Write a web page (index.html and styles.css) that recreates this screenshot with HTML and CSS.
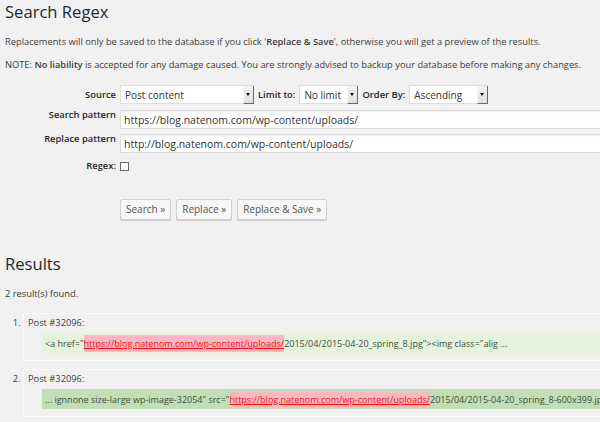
FILE: index.html
```html
<!DOCTYPE html>
<html lang="en">
<head>
<meta charset="utf-8">
<title>Search Regex</title>
<link rel="stylesheet" href="styles.css">
</head>
<body>
<div class="wrap">
  <h2 class="title">Search Regex</h2>
  <p class="note">Replacements will only be saved to the database if you click '<strong>Replace &amp; Save</strong>', otherwise you will get a preview of the results.</p>
  <p class="note">NOTE: <strong>No liability</strong> is accepted for any damage caused. You are strongly advised to backup your database before making any changes.</p>

  <form class="form">
    <div class="row row-source">
      <label class="lbl lbl-source">Source</label>
      <div class="controls">
        <span class="sel sel-source"><select><option>Post content</option></select><span class="arrow"></span></span>
        <label class="inline-lbl">Limit to:</label>
        <span class="sel sel-limit"><select><option>No limit</option></select><span class="arrow"></span></span>
        <label class="inline-lbl">Order By:</label>
        <span class="sel sel-order"><select><option>Ascending</option></select><span class="arrow"></span></span>
      </div>
    </div>
    <div class="row row-search">
      <label class="lbl lbl-search">Search pattern</label>
      <input class="txt" type="text" value="https://blog.natenom.com/wp-content/uploads/">
    </div>
    <div class="row row-replace">
      <label class="lbl lbl-replace">Replace pattern</label>
      <input class="txt" type="text" value="http://blog.natenom.com/wp-content/uploads/">
    </div>
    <div class="row row-regex">
      <label class="lbl lbl-regex">Regex:</label>
      <input class="chk" type="checkbox">
    </div>
    <div class="buttons">
      <button type="button" class="btn">Search »</button>
      <button type="button" class="btn">Replace »</button>
      <button type="button" class="btn">Replace &amp; Save »</button>
    </div>
  </form>

  <h2 class="title results-title">Results</h2>
  <p class="found">2 result(s) found.</p>

  <ol class="results">
    <li class="result">
      <div class="post">Post #32096:</div>
      <div class="match match-light">&lt;a href="<span class="hit">https://blog.natenom.com/wp-content/uploads/</span>2015/04/2015-04-20_spring_8.jpg"&gt;&lt;img class="alig ...</div>
    </li>
    <li class="result">
      <div class="post">Post #32096:</div>
      <div class="match match-dark">... ignnone size-large wp-image-32054" src="<span class="hit">https://blog.natenom.com/wp-content/uploads/</span>2015/04/2015-04-20_spring_8-600x399.jpg" alt="" /&gt;</div>
    </li>
  </ol>
</div>
</body>
</html>
```

FILE: styles.css
```css
html, body {
  margin: 0;
  padding: 0;
  background: #f1f1f1;
  overflow: hidden;
}
body {
  font-family: "Open Sans", "DejaVu Sans", sans-serif;
  font-size: 9.3px;
  color: #3c3c3c;
}
.wrap {
  padding-left: 5px;
}
.title {
  margin: 0;
  font-size: 16.6px;
  font-weight: 400;
  line-height: 24px;
  color: #23282d;
}
.note {
  margin: 10px 0 0;
  line-height: 15px;
  white-space: nowrap;
}
.note + .note {
  margin-top: 8px;
}
.note strong {
  font-weight: 600;
}
.form {
  margin-top: 13px;
}
.row {
  display: flex;
  align-items: flex-start;
}
.lbl {
  width: 111px;
  margin-right: 4px;
  text-align: right;
  font-size: 9.4px;
  font-weight: 600;
  color: #23282d;
  line-height: 12px;
  flex: none;
}
.lbl-source { padding-top: 4px; }
.lbl-search { margin-top: -1.5px; }
.lbl-replace { margin-top: -1px; }
.lbl-regex { margin-top: -2.5px; }
.row-source { margin-bottom: 6px; }
.row-search { margin-bottom: 5px; }
.row-replace { margin-bottom: 9px; }
.controls {
  display: flex;
  align-items: flex-start;
}
.inline-lbl {
  font-size: 9.4px;
  font-weight: 600;
  color: #23282d;
  line-height: 12px;
  padding-top: 4px;
  margin: 0 4px;
}
.sel {
  position: relative;
  display: block;
  height: 19px;
}
.sel select {
  appearance: none;
  -webkit-appearance: none;
  display: block;
  height: 19px;
  width: 100%;
  margin: 0;
  padding: 0 12px 0 4px;
  border: 1px solid #dcdcdc;
  border-radius: 0;
  background: #fff;
  font-family: "Open Sans", "DejaVu Sans", sans-serif;
  font-size: 10px;
  color: #333;
  box-sizing: border-box;
}
.sel-source { width: 134px; }
.sel-limit { width: 59px; }
.sel-order { width: 79px; }
.arrow {
  position: absolute;
  top: 1px;
  right: 0;
  width: 11px;
  height: 18px;
  box-sizing: border-box;
  background: linear-gradient(#f4f4f4, #e0e0e0);
  border-left: 1px solid #f8f8f8;
  border-right: 1px solid #6b6b6b;
  border-bottom: 1px solid #6b6b6b;
}
.arrow::after {
  content: "";
  position: absolute;
  left: 2px;
  top: 7px;
  border-left: 2.5px solid transparent;
  border-right: 2.5px solid transparent;
  border-top: 3px solid #111;
}
.txt {
  display: block;
  width: 500px;
  height: 19px;
  margin: 0;
  padding: 0 3px;
  box-sizing: border-box;
  border: 1px solid #dcdcdc;
  background: #fff;
  box-shadow: inset 0 1px 2px rgba(0,0,0,0.07);
  font-family: "Open Sans", "DejaVu Sans", sans-serif;
  font-size: 10.5px;
  color: #333;
  flex: none;
}
.chk {
  appearance: none;
  -webkit-appearance: none;
  width: 9px;
  height: 9px;
  margin: 0;
  border: 1px solid #6a6a6a;
  background: #fff;
  box-sizing: border-box;
}
.buttons {
  display: flex;
  gap: 5px;
  margin: 27px 0 0 115px;
}
.btn {
  height: 21px;
  margin: 0;
  padding: 0 5px;
  border: 1px solid #cfcfcf;
  border-radius: 2px;
  background: #f7f7f7;
  box-shadow: 0 1px 0 #cccccc;
  font-family: "Open Sans", "DejaVu Sans", sans-serif;
  font-size: 10px;
  color: #555;
  line-height: 18px;
}
.results-title {
  margin-top: 32px;
}
.found {
  margin: 10px 0 0;
  line-height: 15px;
}
.results {
  margin: 12px 0 0;
  padding-left: 18px;
}
.result {
  border: 1px solid #fbfbfb;
  border-right: none;
  padding: 1px 0 7px 4px;
  margin-bottom: 8px;
  width: 620px;
  line-height: 15px;
}
.post {
  line-height: 15px;
}
.match {
  margin: 3px 0 0 14px;
  padding: 3px 4px 2px 3px;
  font-size: 9px;
  line-height: 15px;
  white-space: nowrap;
  overflow: hidden;
  color: #3d4f3d;
}
.match-light { background: #e4f4dc; }
.match-dark { background: #c3deb4; }
.hit {
  background: #ffb6c1;
  color: #e21b1b;
  text-decoration: underline;
  padding: 2px 0;
}
```
